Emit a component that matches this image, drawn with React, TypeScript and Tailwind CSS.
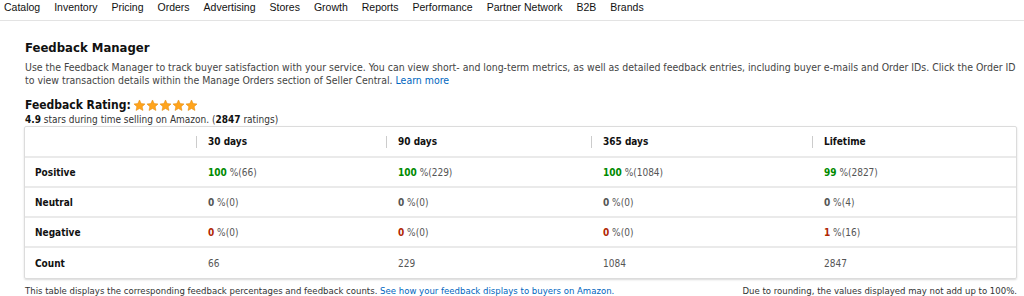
import React from "react";

const navItems = [
  "Catalog",
  "Inventory",
  "Pricing",
  "Orders",
  "Advertising",
  "Stores",
  "Growth",
  "Reports",
  "Performance",
  "Partner Network",
  "B2B",
  "Brands",
];

type Cell = { lead: string; rest: string; tone?: "green" | "red" | "plain" };

const rows: { label: string; cells: Cell[] }[] = [
  {
    label: "Positive",
    cells: [
      { lead: "100", rest: " %(66)", tone: "green" },
      { lead: "100", rest: " %(229)", tone: "green" },
      { lead: "100", rest: " %(1084)", tone: "green" },
      { lead: "99", rest: " %(2827)", tone: "green" },
    ],
  },
  {
    label: "Neutral",
    cells: [
      { lead: "0", rest: " %(0)", tone: "plain" },
      { lead: "0", rest: " %(0)", tone: "plain" },
      { lead: "0", rest: " %(0)", tone: "plain" },
      { lead: "0", rest: " %(4)", tone: "plain" },
    ],
  },
  {
    label: "Negative",
    cells: [
      { lead: "0", rest: " %(0)", tone: "red" },
      { lead: "0", rest: " %(0)", tone: "red" },
      { lead: "0", rest: " %(0)", tone: "red" },
      { lead: "1", rest: " %(16)", tone: "red" },
    ],
  },
];

const counts = ["66", "229", "1084", "2847"];
const periods = ["30 days", "90 days", "365 days", "Lifetime"];

const gridCols = "grid grid-cols-[171px_190px_205px_221px_1fr]";

function Star() {
  return (
    <svg viewBox="0 0 24 24" className="h-[13px] w-[13px]">
      <path
        d="M12 1.8l3.1 6.6 7.1.8-5.3 4.9 1.5 7.1L12 17.6l-6.4 3.6 1.5-7.1-5.3-4.9 7.1-.8z"
        fill="#ffa41c"
        stroke="#e38a0b"
        strokeWidth="1"
        strokeLinejoin="round"
      />
    </svg>
  );
}

function Value({ cell }: { cell: Cell }) {
  const leadClass =
    cell.tone === "green"
      ? "font-bold text-[#008a00]"
      : cell.tone === "red"
        ? "font-bold text-[#b12704]"
        : "font-bold text-[#555]";
  return (
    <span>
      <span className={leadClass}>{cell.lead}</span>
      <span className="text-[#555]">{cell.rest}</span>
    </span>
  );
}

export default function App() {
  return (
    <div className="h-[296px] w-[1024px] overflow-hidden bg-white">
      {/* top nav */}
      <nav className="flex h-[21px] items-start gap-[14px] border-b border-[#e3e3e3] pl-[4px] pt-[1px] font-['Liberation_Sans',sans-serif] text-[10.5px] leading-[13px] text-[#111]">
        {navItems.map((item) => (
          <span key={item}>{item}</span>
        ))}
      </nav>

      <div className="pl-[25px] pr-[6px] pt-[18px] font-['DejaVu_Sans_Condensed','DejaVu_Sans',sans-serif] text-[10px] text-[#333]">
        <h1 className="text-[13px] font-bold leading-[18px] text-[#111]">Feedback Manager</h1>
        <p className="mt-[4px] text-[10.45px] leading-[13px] text-[#444]">
          Use the Feedback Manager to track buyer satisfaction with your service. You can view short- and
          long-term metrics, as well as detailed feedback entries, including buyer e-mails and Order IDs. Click the
          Order ID to view transaction details within the Manage Orders section of Seller Central.{" "}
          <span className="text-[#0066c0]">Learn more</span>
        </p>

        <div className="mt-[10px] flex items-center gap-[2px]">
          <span className="text-[12px] font-bold leading-[16px] text-[#111]">Feedback Rating:</span>
          <span className="flex">
            {[0, 1, 2, 3, 4].map((i) => (
              <Star key={i} />
            ))}
          </span>
        </div>
        <div className="mt-[1px] leading-[12px] text-[#333]">
          <b className="text-[#111]">4.9</b> stars during time selling on Amazon. (<b className="text-[#111]">2847</b>{" "}
          ratings)
        </div>

        {/* table */}
        <div className="-ml-px w-[993px] rounded-[2px] border border-[#dcdcdc] shadow-[0_1px_2px_rgba(0,0,0,0.15)]">
          <div className={`${gridCols} h-[31px] items-center border-b-2 border-[#eaeaea] font-bold text-[#111]`}>
            <div />
            {periods.map((p) => (
              <div key={p} className="flex items-center">
                <span className="h-[12px] w-px bg-[#ccc]" />
                <span className="pl-[11px]">{p}</span>
              </div>
            ))}
          </div>
          {rows.map((r) => (
            <div
              key={r.label}
              className={`${gridCols} h-[30px] items-center border-b-2 border-[#eaeaea]`}
            >
              <div className="pl-[10px] font-bold text-[#111]">{r.label}</div>
              {r.cells.map((c, i) => (
                <div key={i} className="pl-[12px]">
                  <Value cell={c} />
                </div>
              ))}
            </div>
          ))}
          <div className={`${gridCols} h-[30px] items-center`}>
            <div className="pl-[10px] font-bold text-[#111]">Count</div>
            {counts.map((c) => (
              <div key={c} className="pl-[12px] text-[#555]">
                {c}
              </div>
            ))}
          </div>
        </div>

        <div className="mt-[6px] flex w-[992px] justify-between text-[9.5px] leading-[12px] text-[#333]">
          <span>
            This table displays the corresponding feedback percentages and feedback counts.{" "}
            <span className="text-[#0066c0]">See how your feedback displays to buyers on Amazon.</span>
          </span>
          <span>Due to rounding, the values displayed may not add up to 100%.</span>
        </div>
      </div>
    </div>
  );
}
